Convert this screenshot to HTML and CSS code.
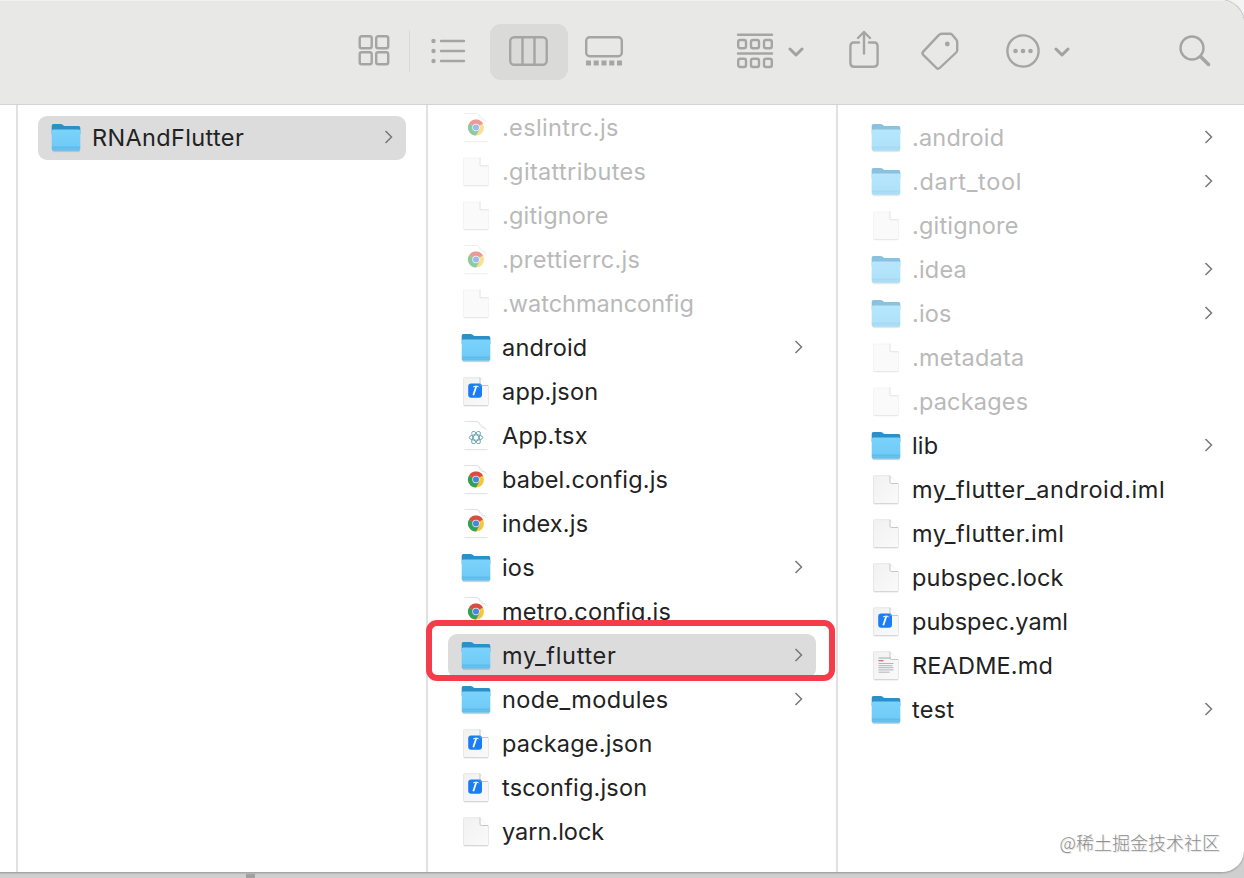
FILE: index.html
```
<!DOCTYPE html>
<html lang="en">
<head>
<meta charset="utf-8">
<title>Files</title>
<link rel="stylesheet" href="styles.css">
</head>
<body>
<svg class="sprite" aria-hidden="true">
  <defs>
    <linearGradient id="front" x1="0" y1="0" x2="0" y2="1"><stop offset="0" stop-color="#7bd3fb"/><stop offset=".78" stop-color="#70cbf6"/><stop offset="1" stop-color="#5eb9e7"/></linearGradient>
    <linearGradient id="paper" x1="0" y1="0" x2="1" y2="1"><stop offset="0" stop-color="#f1f1f1"/><stop offset="1" stop-color="#fafafa"/></linearGradient>
  </defs>
  <symbol id="folder" viewBox="0 0 32 32">
    <path d="M3 29.500h26.500" stroke="#9aa7ae" stroke-opacity=".5" stroke-width="1.200"/>
    <path d="M1.700 3.700q0-1.700 1.700-1.700h7.200q1 0 1.700.6l1.300 1q.6.5 1.500.5h13.500q1.700 0 1.700 1.600V12H1.700z" fill="#2c8fc6"/>
    <path d="M1.700 9q0-1.500 1.500-1.500h25.600q1.500 0 1.500 1.500v18.200q0 1.600-1.600 1.600H3.300q-1.600 0-1.600-1.600z" fill="url(#front)"/>
    <path d="M1.900 25.200h28.200" stroke="#58b4e3" stroke-width=".8"/>
  </symbol>
  <symbol id="page" viewBox="0 0 32 32">
    <path d="M4.500 1.700H20l8.500 8.500v18.100q0 1.200-1.200 1.200H4.700q-1.200 0-1.200-1.200V2.700q0-1 1-1z" fill="url(#paper)" stroke="#e2e2e2" stroke-width=".8"/>
    <path d="M4 29.800h24" stroke="#c9c9c9" stroke-width=".8"/>
    <path d="M20 1.700v6.300q0 1.500 1.500 1.500h6.700z" fill="#fdfdfd"/>
    <path d="M20 1.700v6.300q0 1.500 1.500 1.500h6.700" fill="none" stroke="#c0c0c0" stroke-width=".9"/>
  </symbol>
  <symbol id="dimpage" viewBox="0 0 32 32">
    <path d="M4 2h16v7.500h8.500v20h-25V2z" fill="#f7f7f7" stroke="#e9e9e9" stroke-width=".8"/>
    <path d="M20 1.500V9q0 .8.8.8h7.700M4 29.700h24" fill="none" stroke="#cfcfcf" stroke-width=".9"/>
  </symbol>
  <symbol id="code" viewBox="0 0 32 32">
    <use href="#page"/>
    <rect x="8.200" y="7.500" width="13.800" height="14.300" rx="3" fill="#1b7df2"/>
    <path d="M16.200 10.500l-2.900 8.800" stroke="#fff" stroke-width="1.800"/><path d="M13.200 10.900q2.200-1.200 4.800-.6l.8 1" fill="none" stroke="#fff" stroke-width="1"/>
    <path d="M20 7.500v2h2" fill="none" stroke="#5b9fdf" stroke-width=".8"/>
  </symbol>
  <symbol id="sheet" viewBox="0 0 32 32">
    <path d="M4.500 1.500h12.500q2.500.3 3.200 4.200l1.500 1.400q3.500.4 4.800 2.800" fill="none" stroke="#dedede" stroke-width=".9"/>
    <path d="M18.500 2.500l7 6" stroke="#dcdcdc" stroke-width=".8" stroke-dasharray="1.500 1"/>
    <path d="M4.500 29.700h23" stroke="#dcdcdc" stroke-width=".9"/>
  </symbol>
  <symbol id="chrome" viewBox="0 0 32 32">
    <use href="#sheet"/>
    <circle cx="16" cy="15.500" r="8" fill="#f5c83b"/>
    <path d="M16 15.500L9.070 11.500A8 8 0 0 0 16 23.500l3.500-6z" fill="#31a05a"/>
    <path d="M16 15.500l-6.930-4A8 8 0 0 1 22.930 11.500z" fill="#d94b43"/>
    <circle cx="16" cy="15.500" r="3.700" fill="#e6edf8"/>
    <circle cx="16" cy="15.500" r="3" fill="#4b84dc"/>
  </symbol>
  <symbol id="react" viewBox="0 0 32 32">
    <use href="#sheet"/>
    <g fill="none" stroke="#5c9cab" stroke-width=".9">
      <ellipse cx="16" cy="17.500" rx="6.800" ry="2.700"/><ellipse cx="16" cy="17.500" rx="6.800" ry="2.700" transform="rotate(60 16 17.500)"/><ellipse cx="16" cy="17.500" rx="6.800" ry="2.700" transform="rotate(120 16 17.500)"/>
    </g>
  </symbol>
  <symbol id="readme" viewBox="0 0 32 32">
    <use href="#page"/>
    <path d="M8.500 8h12" stroke="#8fb5ab" stroke-width="1"/>
    <path d="M8.500 10.700h5" stroke="#e0697c" stroke-width="1.300"/>
    <path d="M8.500 13.500h15M8.500 15.700h14M8.500 17.700h15M8.500 19.900h15M8.500 22.200h11" stroke="#a9aeb2" stroke-width=".9"/>
  </symbol>
  <symbol id="chev" viewBox="0 0 10 16"><path d="M1.500 2l6 6-6 6" fill="none" stroke="#77777a" stroke-width="1.500"/></symbol>
  <symbol id="down" viewBox="0 0 16 10"><path d="M2 2l6 6 6-6" fill="none" stroke="#a2a2a1" stroke-width="3" stroke-linecap="round" stroke-linejoin="round"/></symbol>
</svg>

<main class="window">
  <header class="toolbar">
    <div class="views">
      <svg class="tool grid-view" viewBox="0 0 32 32"><rect x="1.700" y="1.200" width="12" height="12" rx="2"/><rect x="18.200" y="1.200" width="12" height="12" rx="2"/><rect x="1.700" y="17.200" width="12" height="12" rx="2"/><rect x="18.200" y="17.200" width="12" height="12" rx="2"/></svg>
      <span class="rule"></span>
      <svg class="tool list-view" viewBox="0 0 34 26"><path d="M10 3h23M10 13h23M10 23h23" stroke-linecap="round"/><g class="solid"><circle cx="2.500" cy="3" r="2.200"/><circle cx="2.500" cy="13" r="2.200"/><circle cx="2.500" cy="23" r="2.200"/></g></svg>
      <span class="pressed"><svg class="tool column-view" viewBox="0 0 40 30"><rect x="1.200" y="1.200" width="36.500" height="27.600" rx="4"/><path d="M13.500 1v28M25.500 1v28"/></svg></span>
      <svg class="tool gallery-view" viewBox="0 0 38 30"><rect x="1.200" y="1.200" width="35.600" height="19" rx="3.500"/><path class="solid" d="M1 24.500h5v5H1zM8.700 24.500h5v5h-5zM16.500 24.500h5v5h-5zM24.300 24.500h5v5h-5zM32 24.500h5v5h-5z"/></svg>
    </div>
    <div class="menu-button">
      <svg class="tool group" viewBox="0 0 36 36"><path d="M1 1.800h34M1 20.500h34" stroke-linecap="round"/><g><rect x="1.200" y="7" width="7.800" height="8.300" rx="2"/><rect x="14" y="7" width="8" height="8.300" rx="2"/><rect x="27" y="7" width="7.800" height="8.300" rx="2"/><rect x="1.200" y="25.700" width="7.800" height="8.300" rx="2"/><rect x="14" y="25.700" width="8" height="8.300" rx="2"/><rect x="27" y="25.700" width="7.800" height="8.300" rx="2"/></g></svg>
      <svg class="down"><use href="#down"/></svg>
    </div>
    <svg class="tool share" viewBox="0 0 30 38"><path d="M10 12.500H5q-3.600 0-3.600 3.600v17Q1.400 36.700 5 36.700h20q3.600 0 3.600-3.600v-17q0-3.600-3.600-3.600h-5M15 23.500V2M9 8l6-6 6 6" stroke-linecap="round" stroke-linejoin="round"/></svg>
    <svg class="tool tag" viewBox="0 0 38 38"><path d="M20.500 1.700H29q1.200 0 2 .8l4.200 5q1 1.200 1 2.500v8q0 1.500-1 2.500L18.700 36q-1.600 1.500-3.200 0L2.200 22.800q-1.500-1.600 0-3.200L18 2.900q1-1.200 2.500-1.200z" stroke-linejoin="round"/><circle class="solid" cx="26.300" cy="12" r="2.400"/></svg>
    <div class="menu-button more">
      <svg class="tool dots" viewBox="0 0 34 34"><circle cx="17" cy="17" r="15.600"/><g class="solid"><circle cx="9.500" cy="17" r="2.300"/><circle cx="17" cy="17" r="2.300"/><circle cx="24.500" cy="17" r="2.300"/></g></svg>
      <svg class="down"><use href="#down"/></svg>
    </div>
    <svg class="tool search" viewBox="0 0 32 32"><circle cx="13" cy="13" r="11.500"/><path d="M21.500 21.500l8 8" stroke-width="3.500" stroke-linecap="round"/></svg>
  </header>

  <section class="columns">
    <div class="gutter"></div>
    <ul class="column">
      <li class="row selected"><svg class="icon"><use href="#folder"/></svg><span class="name loose">RNAndFlutter</span><svg class="chev"><use href="#chev"/></svg></li>
    </ul>
    <ul class="column scrolled">
      <li class="row dim"><svg class="icon"><use href="#chrome"/></svg><span class="name loose">.eslintrc.js</span></li>
      <li class="row dim"><svg class="icon"><use href="#dimpage"/></svg><span class="name loose">.gitattributes</span></li>
      <li class="row dim"><svg class="icon"><use href="#dimpage"/></svg><span class="name">.gitignore</span></li>
      <li class="row dim"><svg class="icon"><use href="#chrome"/></svg><span class="name loose">.prettierrc.js</span></li>
      <li class="row dim"><svg class="icon"><use href="#dimpage"/></svg><span class="name snug">.watchmanconfig</span></li>
      <li class="row"><svg class="icon"><use href="#folder"/></svg><span class="name">android</span><svg class="chev"><use href="#chev"/></svg></li>
      <li class="row"><svg class="icon"><use href="#code"/></svg><span class="name">app.json</span></li>
      <li class="row"><svg class="icon"><use href="#react"/></svg><span class="name">App.tsx</span></li>
      <li class="row"><svg class="icon"><use href="#chrome"/></svg><span class="name">babel.config.js</span></li>
      <li class="row"><svg class="icon"><use href="#chrome"/></svg><span class="name">index.js</span></li>
      <li class="row"><svg class="icon"><use href="#folder"/></svg><span class="name">ios</span><svg class="chev"><use href="#chev"/></svg></li>
      <li class="row"><svg class="icon"><use href="#chrome"/></svg><span class="name">metro.config.js</span></li>
      <li class="row selected"><svg class="icon"><use href="#folder"/></svg><span class="name wide">my_flutter</span><svg class="chev"><use href="#chev"/></svg><span class="highlight"></span></li>
      <li class="row"><svg class="icon"><use href="#folder"/></svg><span class="name loose">node_modules</span><svg class="chev"><use href="#chev"/></svg></li>
      <li class="row"><svg class="icon"><use href="#code"/></svg><span class="name">package.json</span></li>
      <li class="row"><svg class="icon"><use href="#code"/></svg><span class="name">tsconfig.json</span></li>
      <li class="row"><svg class="icon"><use href="#page"/></svg><span class="name snug">yarn.lock</span></li>
    </ul>
    <ul class="column last">
      <li class="row dim"><svg class="icon"><use href="#folder"/></svg><span class="name">.android</span><svg class="chev"><use href="#chev"/></svg></li>
      <li class="row dim"><svg class="icon"><use href="#folder"/></svg><span class="name wide">.dart_tool</span><svg class="chev"><use href="#chev"/></svg></li>
      <li class="row dim"><svg class="icon"><use href="#dimpage"/></svg><span class="name">.gitignore</span></li>
      <li class="row dim"><svg class="icon"><use href="#folder"/></svg><span class="name">.idea</span><svg class="chev"><use href="#chev"/></svg></li>
      <li class="row dim"><svg class="icon"><use href="#folder"/></svg><span class="name">.ios</span><svg class="chev"><use href="#chev"/></svg></li>
      <li class="row dim"><svg class="icon"><use href="#dimpage"/></svg><span class="name">.metadata</span></li>
      <li class="row dim"><svg class="icon"><use href="#dimpage"/></svg><span class="name">.packages</span></li>
      <li class="row"><svg class="icon"><use href="#folder"/></svg><span class="name">lib</span><svg class="chev"><use href="#chev"/></svg></li>
      <li class="row"><svg class="icon"><use href="#page"/></svg><span class="name wide long">my_flutter_android.iml</span></li>
      <li class="row"><svg class="icon"><use href="#page"/></svg><span class="name wide long">my_flutter.iml</span></li>
      <li class="row"><svg class="icon"><use href="#page"/></svg><span class="name">pubspec.lock</span></li>
      <li class="row"><svg class="icon"><use href="#code"/></svg><span class="name snug">pubspec.yaml</span></li>
      <li class="row"><svg class="icon"><use href="#readme"/></svg><span class="name">README.md</span></li>
      <li class="row"><svg class="icon"><use href="#folder"/></svg><span class="name loose">test</span><svg class="chev"><use href="#chev"/></svg></li>
    </ul>
  </section>
  <span class="watermark" lang="zh">@稀土掘金技术社区</span>
</main>
<footer class="desktop"><span class="mark"></span></footer>
</body>
</html>
```
FILE: styles.css
```
* { box-sizing: border-box; }
html { height: 100%; }
body {
  margin: 0;
  height: 878px;
  overflow: hidden;
  background: linear-gradient(#f4f4f4 0 50%, #cfcfcf 50%);
  font-family: Inter, "Liberation Sans", sans-serif;
  color: #222;
}
.sprite { position: absolute; width: 0; height: 0; }
.window {
  position: relative;
  height: 873px;
  display: flex;
  flex-direction: column;
  background: #fff;
  border-bottom: 1px solid #a6a6a6;
  border-radius: 0 24px 22px 0;
  overflow: hidden;
  box-shadow: 0 0 1px 1px #b9b9b9;
}
.toolbar {
  flex: none;
  height: 105px;
  display: flex;
  align-items: center;
  padding: 0 33px 4px 358px;
  background: #e8e8e7;
  border-top: 1px solid #f2f2f1;
  border-bottom: 1px solid #d3d3d2;
}
.tool { flex: none; fill: none; stroke: #a5a5a4; stroke-width: 2.4; overflow: visible; }
.tool .solid { fill: #a5a5a4; stroke: none; }
.views { display: flex; align-items: center; }
.grid-view { width: 32px; height: 32px; }
.rule { width: 1px; height: 42px; margin: 0 21px 0 19px; background: #d9d9d8; }
.list-view { width: 34px; height: 26px; }
.pressed {
  width: 78px;
  height: 56px;
  margin: 2px 17px 0 25px;
  display: grid;
  place-items: center;
  background: #dadad9;
  border-radius: 11px;
}
.column-view { width: 40px; height: 30px; margin-top: -2px; }
.gallery-view { width: 38px; height: 30px; }
.menu-button { display: flex; align-items: center; gap: 15px; margin-left: 114px; }
.group { width: 36px; height: 36px; }
.down { width: 16px; height: 10px; margin-top: 2px; overflow: visible; }
.share { width: 30px; height: 38px; margin: -3px 0 0 44.5px; }
.tag { width: 38px; height: 38px; margin: 1px 0 0 42px; }
.more { margin-left: 47px; gap: 14.5px; }
.dots { width: 34px; height: 34px; }
.search { width: 32px; height: 32px; margin-left: auto; }

.columns { flex: 1; display: flex; min-height: 0; }
.gutter { flex: none; width: 18px; border-right: 2px solid #e1e1e1; }
.column {
  flex: none;
  width: 410px;
  margin: 0;
  padding: 11px 20px 0;
  list-style: none;
  border-right: 2px solid #e1e1e1;
}
.scrolled { padding-top: 1px; }
.last { border-right: 0; }
.row {
  position: relative;
  width: 368px;
  height: 44px;
  display: flex;
  align-items: center;
  padding: 0 12px;
}
.selected { background: #dcdcdc; border-radius: 9px; }
.icon { flex: none; width: 32px; height: 32px; }
.name {
  flex: 1;
  margin-left: 10px;
  padding-bottom: 1px;
  font-size: 23.5px;
  line-height: 30px;
  letter-spacing: .18px;
  white-space: nowrap;
}
.loose { letter-spacing: .35px; }
.wide { letter-spacing: .68px; }
.long { letter-spacing: .54px; }
.snug { letter-spacing: 0; }
.dim .icon { opacity: .55; }
.dim .name { color: #b9b9b9; }
.chev { flex: none; width: 10px; height: 16px; margin: 0 0 2px; }
.highlight {
  position: absolute;
  inset: -14px -19px -3px -22px;
  border: 6px solid #f33d4a;
  border-radius: 11px;
}
.watermark {
  position: absolute;
  right: 24px;
  bottom: 17px;
  font: 300 18px/26px "Noto Sans CJK SC", sans-serif;
  color: #8e8e8e;
  text-shadow: 1px 1px 1px #ddd;
}
.desktop { height: 5px; display: flex; background: #cfcfcf; }
.mark { width: 9px; margin-left: 246px; background: #a0a0a0; }
```
